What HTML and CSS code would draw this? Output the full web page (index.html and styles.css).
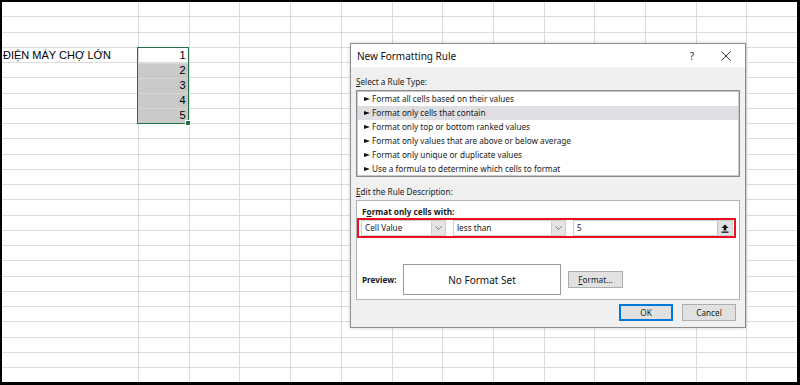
FILE: index.html
```html
<!DOCTYPE html>
<html lang="vi">
<head>
    <meta charset="UTF-8">
    <meta name="viewport" content="width=device-width, initial-scale=1.0">
    <title>New Formatting Rule</title>
    <link rel="stylesheet" href="styles.css">
</head>
<body>
    <!-- Worksheet -->
    <div class="sheet">
        <div class="cells">
            <div class="cell label">ĐIỆN MÁY CHỢ LỚN</div>
            <div class="selection">
                <div class="num">1</div>
                <div class="num shaded">2</div>
                <div class="num shaded">3</div>
                <div class="num shaded">4</div>
                <div class="num shaded">5</div>
                <span class="handle"></span>
            </div>
        </div>

        <!-- Conditional formatting dialog -->
        <div class="dialog">
            <div class="title-bar">
                <span class="title">New Formatting Rule</span>
                <span class="help">?</span>
                <svg class="close" width="10" height="10" viewBox="0 0 10 10">
                    <path d="M0.5 0.5 L9.5 9.5 M9.5 0.5 L0.5 9.5" stroke="#333" stroke-width="1"/>
                </svg>
            </div>

            <div class="dialog-body">
                <div class="group-label"><u>S</u>elect a Rule Type:</div>
                <ul class="rule-list">
                    <li>Format all cells based on their values</li>
                    <li class="selected">Format only cells that contain</li>
                    <li>Format only top or bottom ranked values</li>
                    <li>Format only values that are above or below average</li>
                    <li>Format only unique or duplicate values</li>
                    <li>Use a formula to determine which cells to format</li>
                </ul>

                <div class="group-label"><u>E</u>dit the Rule Description:</div>
                <div class="rule-panel">
                    <div class="panel-heading">F<u>o</u>rmat only cells with:</div>
                    <div class="criteria">
                        <div class="combo combo-value">
                            <span class="combo-text">Cell Value</span>
                            <span class="combo-btn"><svg width="7" height="4" viewBox="0 0 7 4"><path d="M0.5 0.5 L3.5 3.5 L6.5 0.5" fill="none" stroke="#777" stroke-width="1"/></svg></span>
                        </div>
                        <div class="combo combo-op">
                            <span class="combo-text">less than</span>
                            <span class="combo-btn"><svg width="7" height="4" viewBox="0 0 7 4"><path d="M0.5 0.5 L3.5 3.5 L6.5 0.5" fill="none" stroke="#777" stroke-width="1"/></svg></span>
                        </div>
                        <div class="ref-input">
                            <span class="combo-text">5</span>
                            <span class="ref-btn"><svg width="8" height="9" viewBox="0 0 8 9"><path d="M4 0.5 L7.5 4 L5.3 4 L5.3 6.5 L2.7 6.5 L2.7 4 L0.5 4 Z" fill="#111"/><rect x="0.5" y="7.5" width="7" height="1.3" fill="#111"/></svg></span>
                        </div>
                    </div>
                    <div class="preview-row">
                        <span class="preview-label">Preview:</span>
                        <div class="preview-box">No Format Set</div>
                        <button class="btn btn-format"><u>F</u>ormat...</button>
                    </div>
                </div>

                <div class="actions">
                    <button class="btn btn-ok">OK</button>
                    <button class="btn">Cancel</button>
                </div>
            </div>
        </div>
    </div>
</body>
</html>
```

FILE: styles.css
```css
body {
    margin: 0;
    background-color: white;
    font-family: "Liberation Sans", Arial, sans-serif;
}

/* Worksheet with its grid lines */
.sheet {
    position: relative;
    width: 800px;
    height: 385px;
    box-sizing: border-box;
    border: 2px solid #000;
    border-right-width: 3px;
    border-bottom-width: 3px;
    overflow: hidden;
    background-color: #fff;
    background-image:
        repeating-linear-gradient(90deg, #dcdcdc 0 1px, transparent 1px 50.7px),
        repeating-linear-gradient(180deg, transparent 0 14.25px, #dcdcdc 14.25px 15.25px);
    background-size: calc(100% - 136px) 100%, 100% 100%;
    background-position: 136px 0, 0 0;
    background-repeat: no-repeat;
}

.cells {
    display: grid;
    grid-template-columns: 136px repeat(13, 50.7px);
    grid-auto-rows: 15.25px;
}

.cell {
    font-size: 11px;
    line-height: 15px;
    color: #000;
    white-space: nowrap;
}

.label {
    grid-column: 1;
    grid-row: 4;
    padding-left: 1px;
}

/* Selected range A..A+4 */
.selection {
    grid-column: 2;
    grid-row: 4 / span 5;
    position: relative;
    display: grid;
    grid-template-rows: repeat(5, minmax(0, 1fr));
    border: 1px solid #217346;
    margin: -1px 0 0 -1px;
}

.num {
    font-size: 11px;
    line-height: 14px;
    text-align: right;
    padding-right: 2px;
    color: #000;
    overflow: hidden;
}

.num.shaded {
    background-color: #c9c9c9;
    box-shadow: inset 0 1px 0 #d6d6d6;
}

.handle {
    position: absolute;
    right: -3px;
    bottom: -3px;
    width: 4px;
    height: 4px;
    background-color: #217346;
    border: 1px solid #fff;
}

/* Dialog window */
.dialog {
    position: absolute;
    left: 348px;
    top: 41px;
    width: 396px;
    height: 285px;
    box-sizing: border-box;
    border: 1px solid #8c8c8c;
    background-color: #f0f0f0;
    box-shadow: 0 0 4px rgba(0, 0, 0, 0.18);
    display: flex;
    flex-direction: column;
    font-family: "Noto Sans", "Open Sans", sans-serif;
    font-size: 8.2px;
    color: #1a1a1a;
}

.title-bar {
    height: 23px;
    background-color: #fff;
    display: flex;
    align-items: center;
    padding: 0 14px 0 6px;
}

.title {
    flex: 1;
    font-size: 10px;
    color: #111;
}

.help {
    font-size: 10px;
    color: #333;
    margin-right: 27px;
}

.dialog-body {
    padding: 0 5px 0 5px;
    display: flex;
    flex-direction: column;
}

.group-label {
    margin-top: 9px;
    line-height: 12px;
    height: 12px;
}

.rule-list {
    list-style: none;
    margin: 2px 0 0 0;
    padding: 1px;
    height: 87px;
    box-sizing: border-box;
    border: 1px solid #8a8a8a;
    box-shadow: inset 0 0 0 1px #c8c8c8;
    background-color: #fff;
}

.rule-list li {
    height: 14px;
    line-height: 14px;
    padding-left: 14px;
    position: relative;
    white-space: nowrap;
}

.rule-list li::before {
    content: "";
    position: absolute;
    left: 6px;
    top: 5px;
    border-left: 6px solid #111;
    border-top: 2px solid transparent;
    border-bottom: 2px solid transparent;
}

.rule-list li.selected {
    background-color: #dedee3;
}

/* Rule description panel */
.rule-panel {
    margin-top: 2px;
    height: 100px;
    box-sizing: border-box;
    border: 1px solid #b4b4b4;
    background-color: #fff;
    display: flex;
    flex-direction: column;
}

.panel-heading {
    font-weight: bold;
    margin-top: 5px;
    padding-left: 5px;
    line-height: 12px;
}

.criteria {
    height: 20px;
    box-sizing: border-box;
    margin-right: 3px;
    border: 2px solid #e8111b;
    display: flex;
    align-items: center;
    gap: 7px;
    padding-left: 2px;
}

.combo,
.ref-input {
    height: 16px;
    box-sizing: border-box;
    border: 1px solid #cfcfcf;
    display: flex;
    align-items: center;
    background-color: #fff;
}

.combo-value {
    width: 85px;
}

.combo-op {
    width: 113px;
}

.ref-input {
    width: 160px;
    border-color: #c4d0dc;
}

.combo-text {
    flex: 1;
    padding-left: 3px;
    line-height: 14px;
}

.combo-btn {
    width: 13px;
    height: 14px;
    background-color: #e4e4e4;
    border-left: 1px solid #cdcdcd;
    display: flex;
    align-items: center;
    justify-content: center;
}

.ref-btn {
    width: 14px;
    height: 14px;
    background-color: #e1e1e1;
    border-left: 1px solid #bcbcbc;
    display: flex;
    align-items: center;
    justify-content: center;
}

.preview-row {
    display: flex;
    align-items: center;
    margin-top: 26px;
    padding-left: 5px;
}

.preview-label {
    font-weight: bold;
    width: 41px;
}

.preview-box {
    width: 158px;
    height: 31px;
    box-sizing: border-box;
    border: 1px solid #9a9a9a;
    display: flex;
    align-items: center;
    justify-content: center;
    font-size: 10px;
    color: #111;
}

.btn {
    font-family: "Noto Sans", "Open Sans", sans-serif;
    font-size: 8.2px;
    color: #1a1a1a;
    background-color: #e1e1e1;
    border: 1px solid #adadad;
    border-radius: 0;
    width: 54px;
    height: 17px;
    padding: 0;
    line-height: 14px;
}

.btn-format {
    margin-left: 7px;
    width: 55px;
}

.actions {
    display: flex;
    justify-content: flex-end;
    gap: 9px;
    margin-top: 4px;
    padding-right: 4px;
}

.btn-ok {
    border-color: #0078d7;
    box-shadow: inset 0 0 0 1px #0078d7;
}
```
